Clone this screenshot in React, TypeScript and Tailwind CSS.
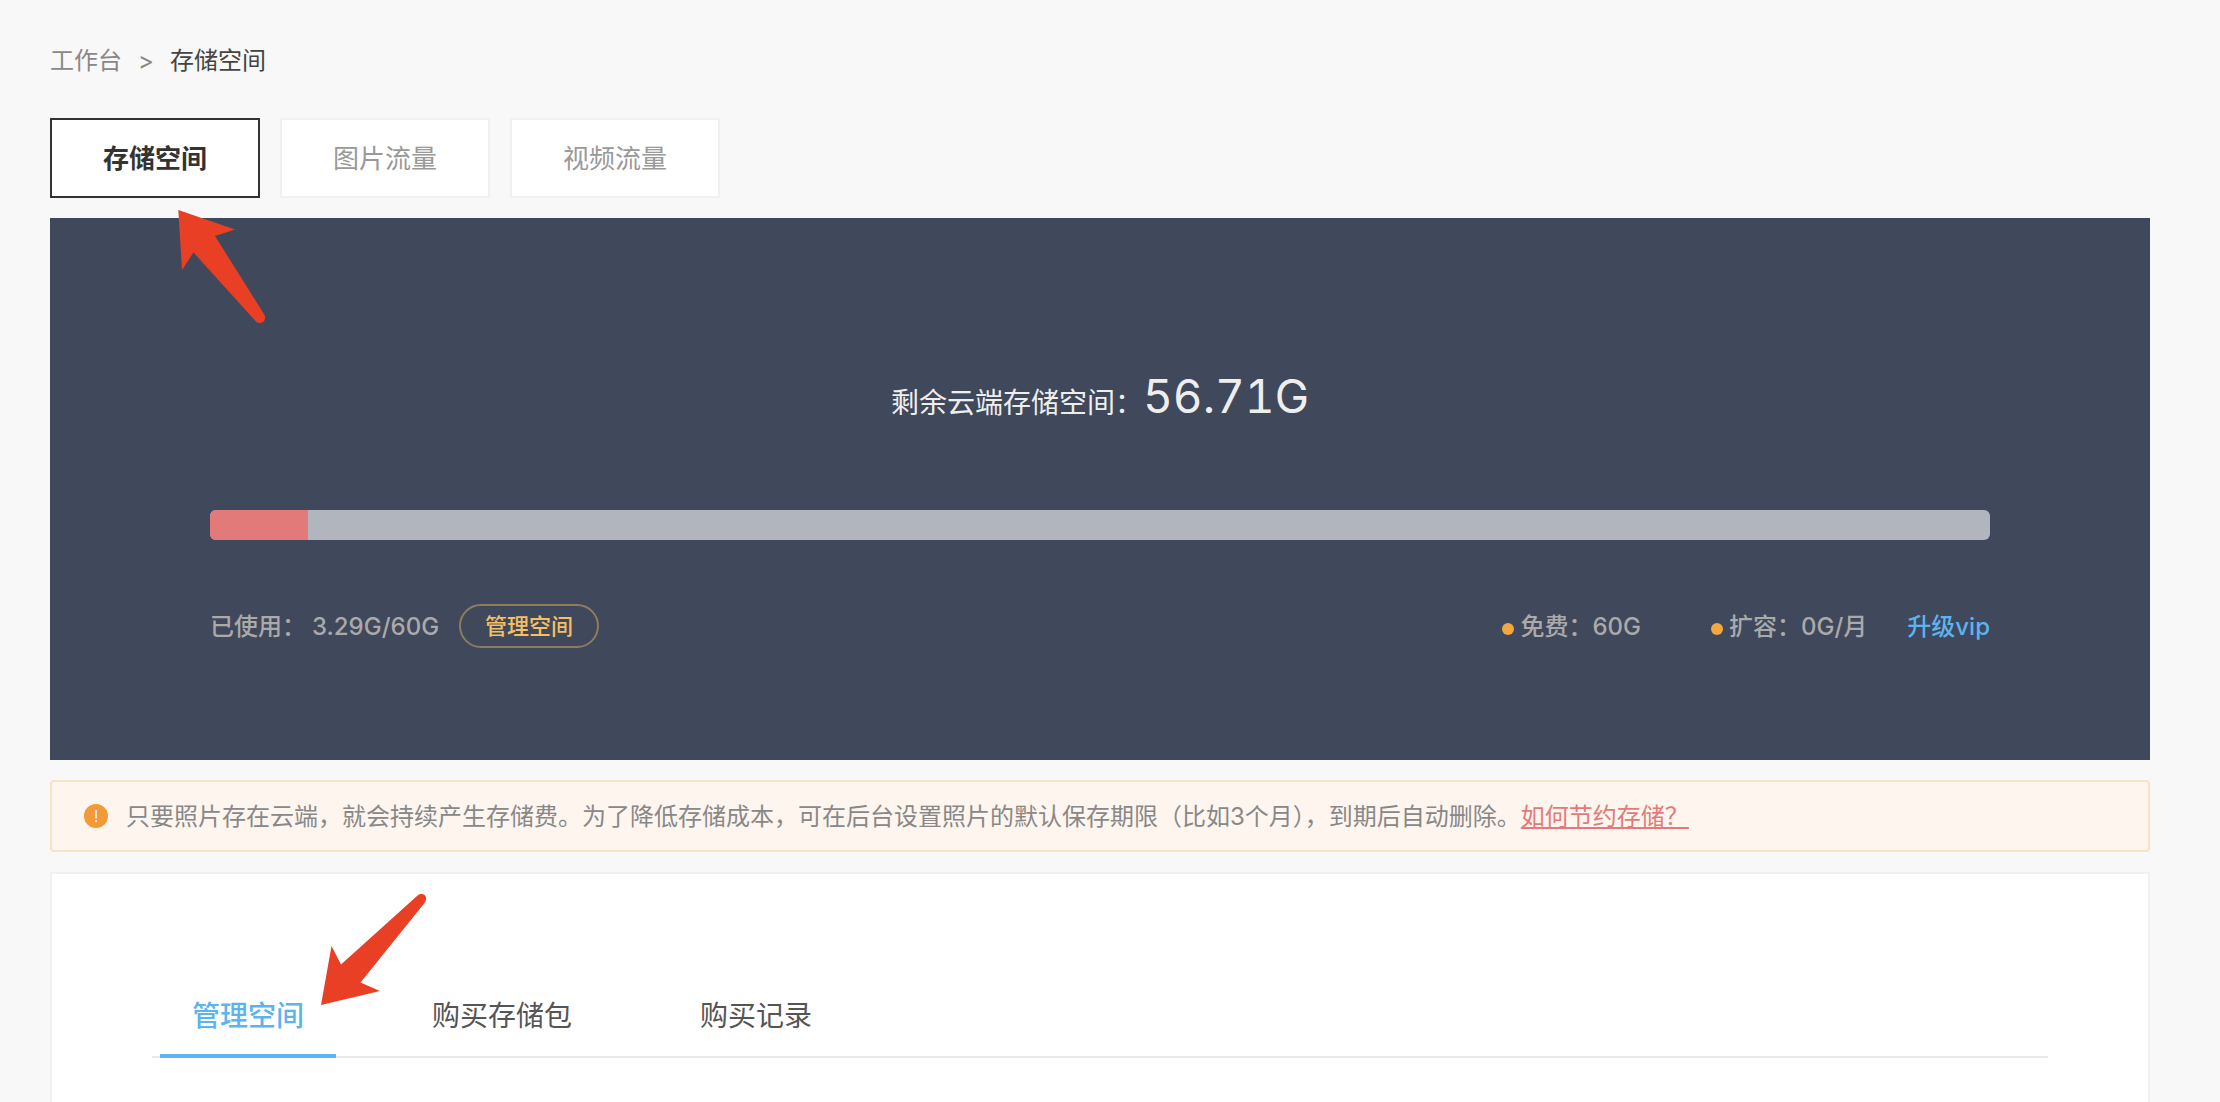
import { useState } from "react";

const TRAFFIC_TABS = ["存储空间", "图片流量", "视频流量"];

const MANAGE_TABS = ["管理空间", "购买存储包", "购买记录"];

const USED = 3.29;
const TOTAL = 60;

function Breadcrumb() {
  return (
    <nav className="flex items-center gap-4 text-[24px] leading-[38px] text-[#888]">
      <a href="#workbench">工作台</a>
      <span>&gt;</span>
      <span className="text-[#444]">存储空间</span>
    </nav>
  );
}

function TrafficTabs() {
  const [active, setActive] = useState(0);

  return (
    <div className="relative mt-[38px] flex gap-5">
      {TRAFFIC_TABS.map((label, i) => (
        <button
          key={label}
          onClick={() => setActive(i)}
          className={`h-20 w-[210px] border-2 bg-white pt-0.5 text-[26px] leading-9 ${
            i === active
              ? "border-[#333] font-semibold text-[#333]"
              : "border-[#f0f0f0] text-[#999]"
          }`}
        >
          {label}
        </button>
      ))}
      <svg
        className="absolute top-[92px] left-32 h-[114px] w-[88px]"
        viewBox="178 210 88 114"
        fill="#e93f25"
      >
        <path d="M178.3 210L235 229.5L215 236L264.3 314.5C266.5 319 264 323 260 323C258 323 257 322.5 255.5 321L193.5 252.5L182 270Z" />
      </svg>
    </div>
  );
}

function Quota({ label, value }: { label: string; value: string }) {
  return (
    <div className="flex items-center">
      <span className="mt-1 mr-1.5 h-3 w-3 rounded-full bg-[#f2a83e]" />
      <span>
        {label}：{value}
      </span>
    </div>
  );
}

function StoragePanel() {
  const percent = (USED / TOTAL) * 100;

  return (
    <section className="mt-5 bg-[#40485b] px-40 pt-[148px] pb-28">
      <h1 className="flex h-[67px] items-baseline justify-center text-[28px] leading-[60px] text-[#eee]">
        剩余云端存储空间：
        <span className="text-[46px] tabular-nums">56.71G</span>
      </h1>
      <div className="mt-[77px] h-[30px] overflow-hidden rounded-md bg-[#b1b5be]">
        <div
          className="h-full bg-[#e37a7a]"
          style={{ width: `${percent}%` }}
        />
      </div>
      <div className="mt-16 flex h-11 items-center justify-between text-[24px] leading-9 font-medium text-[#aaa]">
        <div className="flex items-center">
          <span className="pt-0.5">已使用：</span>
          <span className="ml-1.5 pt-0.5">
            {USED}G/{TOTAL}G
          </span>
          <button className="ml-5 h-11 w-[140px] rounded-full border-2 border-[#8d7c60] text-[22px] leading-8 text-[#f5bf62]">
            管理空间
          </button>
        </div>
        <div className="flex items-center pt-0.5">
          <Quota label="免费" value="60G" />
          <span className="w-[70px]" />
          <Quota label="扩容" value="0G/月" />
          <a href="#vip" className="ml-10 text-[#5cb4ef]">
            升级vip
          </a>
        </div>
      </div>
    </section>
  );
}

function Notice() {
  return (
    <div className="mt-5 flex h-[72px] items-center rounded border-2 border-[#f7e3c5] bg-[#fef5ee] px-8 text-[24px] leading-9 text-[#888]">
      <svg className="mr-[18px] h-6 w-6" viewBox="0 0 24 24">
        <circle cx="12" cy="12" r="12" fill="#f29a38" />
        <path d="M12 6.5V14" stroke="#fff" strokeWidth="1.5" strokeLinecap="round" />
        <circle cx="12" cy="17.2" r="1" fill="#fff" />
      </svg>
      <p className="pt-0.5">
        只要照片存在云端，就会持续产生存储费。为了降低存储成本，可在后台设置照片的默认保存期限（比如3个月），到期后自动删除。
        <a href="#save" className="text-[#e37a7a] underline underline-offset-2">
          如何节约存储？
        </a>
      </p>
    </div>
  );
}

function ManageCard() {
  const [active, setActive] = useState(0);

  return (
    <section className="mt-5 flex-1 border-2 border-b-0 border-[#f0f0f0] bg-white px-[100px] pt-[112px]">
      <div className="relative flex gap-16 border-b-2 border-[#e8e8e8] px-2">
        {MANAGE_TABS.map((label, i) => (
          <button
            key={label}
            onClick={() => setActive(i)}
            className={`-mb-0.5 h-[72px] border-b-4 px-8 pb-2 text-[28px] leading-10 ${
              i === active
                ? "border-[#5cb4ef] font-medium text-[#5cb4ef]"
                : "border-transparent text-[#555]"
            }`}
          >
            {label}
          </button>
        ))}
        <svg
          className="absolute bottom-[51px] left-[169px] h-[112px] w-[106px]"
          viewBox="321 893 106 112"
          fill="#e93f25"
        >
          <path d="M321 1005L380 991L360.5 982.5L424.5 903C428 898 425.5 894 421.5 894C420 894 418.5 894.5 417 896L341 964.5L331.5 946Z" />
        </svg>
      </div>
    </section>
  );
}

export default function App() {
  return (
    <div
      lang="zh-CN"
      className="flex min-h-screen flex-col bg-[#f8f8f8] pt-[42px] pr-[70px] pl-[50px] font-[Inter,'Noto_Sans_CJK_SC',sans-serif]"
    >
      <Breadcrumb />
      <TrafficTabs />
      <StoragePanel />
      <Notice />
      <ManageCard />
    </div>
  );
}
